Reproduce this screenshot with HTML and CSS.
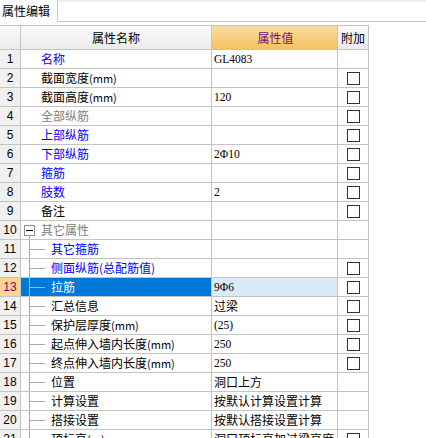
FILE: index.html
```html
<!DOCTYPE html>
<html lang="zh-CN">
<head>
<meta charset="utf-8">
<title>属性编辑</title>
<link rel="stylesheet" href="styles.css">
</head>
<body>
<div class="tabbar">
  <div class="tab">属性编辑</div>
  <div class="tabfill"></div>
</div>
<div class="grid">
  <div class="row head">
    <div class="c num"></div>
    <div class="c name hname">属性名称</div>
    <div class="c val hval">属性值</div>
    <div class="c add hadd">附加</div>
  </div>

  <div class="row"><div class="c num">1</div><div class="c name"><span class="gut"></span><span class="blue">名称</span></div><div class="c val"><span class="a">GL4083</span></div><div class="c add"></div></div>
  <div class="row"><div class="c num">2</div><div class="c name"><span class="gut"></span><span>截面宽度<span class="u">(mm)</span></span></div><div class="c val"></div><div class="c add"><span class="cb"></span></div></div>
  <div class="row"><div class="c num">3</div><div class="c name"><span class="gut"></span><span>截面高度<span class="u">(mm)</span></span></div><div class="c val"><span class="a">120</span></div><div class="c add"><span class="cb"></span></div></div>
  <div class="row"><div class="c num">4</div><div class="c name"><span class="gut"></span><span class="gray">全部纵筋</span></div><div class="c val"></div><div class="c add"><span class="cb"></span></div></div>
  <div class="row"><div class="c num">5</div><div class="c name"><span class="gut"></span><span class="blue">上部纵筋</span></div><div class="c val"></div><div class="c add"><span class="cb"></span></div></div>
  <div class="row"><div class="c num">6</div><div class="c name"><span class="gut"></span><span class="blue">下部纵筋</span></div><div class="c val"><span class="a">2Φ10</span></div><div class="c add"><span class="cb"></span></div></div>
  <div class="row"><div class="c num">7</div><div class="c name"><span class="gut"></span><span class="blue">箍筋</span></div><div class="c val"></div><div class="c add"><span class="cb"></span></div></div>
  <div class="row"><div class="c num">8</div><div class="c name"><span class="gut"></span><span class="blue">肢数</span></div><div class="c val"><span class="a">2</span></div><div class="c add"><span class="cb"></span></div></div>
  <div class="row"><div class="c num">9</div><div class="c name"><span class="gut"></span><span>备注</span></div><div class="c val"></div><div class="c add"><span class="cb"></span></div></div>
  <div class="row"><div class="c num">10</div><div class="c name"><span class="gut group"><span class="box"><span class="minus"></span></span></span><span class="gray">其它属性</span></div><div class="c val"></div><div class="c add"></div></div>
  <div class="row"><div class="c num">11</div><div class="c name"><span class="gut child"></span><span class="blue">其它箍筋</span></div><div class="c val"></div><div class="c add"></div></div>
  <div class="row"><div class="c num">12</div><div class="c name"><span class="gut child"></span><span class="blue">侧面纵筋(总配筋值)</span></div><div class="c val"></div><div class="c add"><span class="cb"></span></div></div>
  <div class="row sel"><div class="c num">13</div><div class="c name"><span class="gut child"></span><span>拉筋</span></div><div class="c val"><span class="a">9Φ6</span></div><div class="c add"><span class="cb"></span></div></div>
  <div class="row"><div class="c num">14</div><div class="c name"><span class="gut child"></span><span>汇总信息</span></div><div class="c val">过梁</div><div class="c add"><span class="cb"></span></div></div>
  <div class="row"><div class="c num">15</div><div class="c name"><span class="gut child"></span><span>保护层厚度<span class="u">(mm)</span></span></div><div class="c val"><span class="a">(25)</span></div><div class="c add"><span class="cb"></span></div></div>
  <div class="row"><div class="c num">16</div><div class="c name"><span class="gut child"></span><span>起点伸入墙内长度<span class="u">(mm)</span></span></div><div class="c val"><span class="a">250</span></div><div class="c add"><span class="cb"></span></div></div>
  <div class="row"><div class="c num">17</div><div class="c name"><span class="gut child"></span><span>终点伸入墙内长度<span class="u">(mm)</span></span></div><div class="c val"><span class="a">250</span></div><div class="c add"><span class="cb"></span></div></div>
  <div class="row"><div class="c num">18</div><div class="c name"><span class="gut child"></span><span>位置</span></div><div class="c val">洞口上方</div><div class="c add"></div></div>
  <div class="row"><div class="c num">19</div><div class="c name"><span class="gut child"></span><span>计算设置</span></div><div class="c val">按默认计算设置计算</div><div class="c add"></div></div>
  <div class="row"><div class="c num">20</div><div class="c name"><span class="gut child"></span><span>搭接设置</span></div><div class="c val">按默认搭接设置计算</div><div class="c add"></div></div>
  <div class="row"><div class="c num">21</div><div class="c name"><span class="gut child"></span><span>顶标高<span class="u">(m)</span></span></div><div class="c val">洞口顶标高加过梁高度</div><div class="c add"><span class="cb"></span></div></div>
</div>
</body>
</html>
```

FILE: styles.css
```css
html, body {
  margin: 0;
  padding: 0;
  overflow: hidden;
  background: #ffffff;
}
body {
  font-family: "Noto Sans CJK SC", "Noto Sans", sans-serif;
  font-size: 12px;
  color: #000000;
}

/* tab strip */
.tabbar {
  display: flex;
  height: 22px;
}
.tab {
  width: 55px;
  height: 22px;
  padding-left: 2px;
  border-right: 1px solid #c8c8c8;
  background: #ffffff;
  line-height: 21px;
  white-space: nowrap;
}
.tabfill {
  flex: 1;
  box-sizing: border-box;
  height: 22px;
  border-top: 2px solid #f0f0f0;
  border-bottom: 1px solid #c8c8c8;
}

/* grid */
.grid {
  margin-top: 3px;
  border-top: 1px solid #c4c4c4;
  width: 369px;
}
.row {
  display: grid;
  grid-template-columns: 21px 191px 126px 31px;
  height: 19px;
}
.c {
  box-sizing: border-box;
  border-right: 1px solid #c4c4c4;
  border-bottom: 1px solid #c4c4c4;
  display: flex;
  align-items: center;
  line-height: 18px;
  white-space: nowrap;
  overflow: hidden;
}
.num {
  justify-content: center;
  background: #f0f0f0;
  font-family: "Liberation Sans", sans-serif;
  font-size: 12px;
}
.val {
  padding-left: 2px;
}
.add {
  justify-content: center;
}

/* header */
.head {
  height: 24px;
}
.head .c {
  justify-content: center;
  line-height: 23px;
}
.head .num,
.hname,
.hadd {
  background: linear-gradient(#fafafa, #ebebeb);
}
.hval {
  background: linear-gradient(#fbdda4, #f3c25d);
  color: #7b0d7b;
}

/* text colours */
.blue { color: #0000ff; }
.gray { color: #808080; }
.a {
  font-family: "Liberation Serif", serif;
  font-size: 11.5px;
}
.u {
  font-size: 11px;
}

/* tree gutter */
.gut {
  flex: none;
  width: 20px;
  height: 18px;
}
.gut.child {
  width: 30px;
  background:
    linear-gradient(#a8a8a8, #a8a8a8) 8px 0 / 1px 100% no-repeat,
    linear-gradient(#a8a8a8, #a8a8a8) 9px 9px / 15px 1px no-repeat;
}
.gut.group {
  display: flex;
  justify-content: flex-start;
  align-items: flex-start;
  background: linear-gradient(#a8a8a8, #a8a8a8) 8px 15px / 1px 3px no-repeat;
}
.box {
  box-sizing: border-box;
  width: 11px;
  height: 11px;
  margin: 4px 0 0 3px;
  border: 1px solid #919191;
  background: #ffffff;
  display: flex;
  align-items: center;
  justify-content: center;
}
.minus {
  width: 7px;
  height: 1px;
  background: #000000;
}

/* checkbox */
.cb {
  box-sizing: border-box;
  width: 13px;
  height: 13px;
  border: 1px solid #333333;
  background: #ffffff;
  margin-left: 1px;
}

/* selected row */
.sel .num {
  background: #fcd591;
  color: #800080;
}
.sel .name {
  background: #0078d7;
  color: #ffffff;
}
.sel .gut.child {
  background:
    linear-gradient(#8cc0ec, #8cc0ec) 8px 0 / 1px 100% no-repeat,
    linear-gradient(#8cc0ec, #8cc0ec) 9px 9px / 15px 1px no-repeat;
}
.sel .val {
  background: #d9eaf9;
}
```
